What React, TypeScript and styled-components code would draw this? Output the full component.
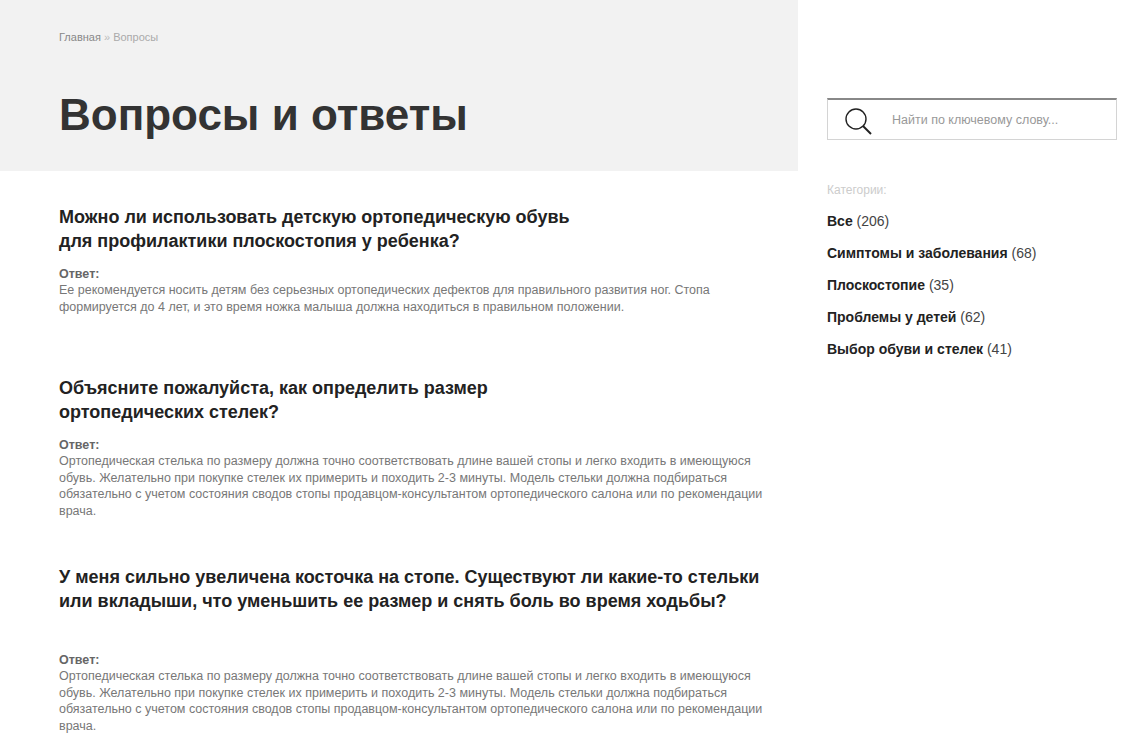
import React from "react";
import styled, { createGlobalStyle } from "styled-components";

const Global = createGlobalStyle`
  body { margin: 0; font-family: "Liberation Sans", Arial, sans-serif; background: #fff; }
`;
const Page = styled.div`display: flex; width: 1126px; min-height: 741px;`;
const Main = styled.div`width: 798px; flex-shrink: 0;`;
const Hero = styled.div`background: #f2f2f2; height: 171px; padding: 31px 0 0 59px; box-sizing: border-box;`;
const Crumbs = styled.div`font-size: 11px; color: #888;
  span { color: #bbb; } b { font-weight: normal; color: #aaa; }`;
const Title = styled.h1`margin: 47px 0 0; font-size: 44px; font-weight: bold; color: #333; line-height: 50px;`;
const List = styled.div`padding: 34px 0 0 59px; width: 705px;`;
const Item = styled.div<{ gap: number }>`margin-bottom: ${p => p.gap}px;`;
const Q = styled.h3<{ after: number }>`margin: 0 0 ${p => p.after}px; font-size: 18px; line-height: 24px; color: #222; font-weight: bold;`;
const Label = styled.div`font-size: 12.5px; font-weight: bold; color: #666; line-height: 16px;`;
const Ans = styled.p`margin: 0; font-size: 12.5px; line-height: 16.5px; color: #777;`;
const Side = styled.div`padding: 98px 0 0 29px; flex: 1;`;
const Search = styled.div`width: 290px; height: 42px; box-sizing: border-box; border: 1px solid #d4d4d4; border-top: 2px solid #888; display: flex; align-items: center;`;
const Icon = styled.div`width: 62px; display: flex; justify-content: center; padding-top: 4px;`;
const Input = styled.input`border: none; outline: none; font-family: inherit; font-size: 12.5px; color: #555; flex: 1; background: transparent;
  &::placeholder { color: #999; }`;
const CatTitle = styled.div`margin-top: 43px; font-size: 12px; color: #ccc;`;
const Cats = styled.div`margin-top: 16px; display: flex; flex-direction: column; gap: 15px;`;
const Cat = styled.div`font-size: 14px; line-height: 17px; color: #222;
  b { font-weight: bold; } span { color: #444; }`;

const answer2 = "Ортопедическая стелька по размеру должна точно соответствовать длине вашей стопы и легко  входить в имеющуюся обувь. Желательно при покупке стелек их примерить и походить 2-3 минуты. Модель стельки должна подбираться обязательно с учетом состояния сводов стопы продавцом-консультантом ортопедического салона или по рекомендации врача.";

const items = [
  { q: ["Можно ли использовать детскую ортопедическую обувь", "для профилактики плоскостопия у ребенка?"], a: "Ее рекомендуется носить детям без серьезных ортопедических дефектов для правильного развития ног. Стопа формируется до 4 лет, и это время ножка малыша должна находиться в правильном положении.", after: 13, gap: 61 },
  { q: ["Объясните пожалуйста, как определить размер", "ортопедических стелек?"], a: answer2, after: 13, gap: 46 },
  { q: ["У меня сильно увеличена косточка на стопе. Существуют ли какие-то стельки", "или вкладыши, что уменьшить ее размер и снять боль во время ходьбы?"], a: answer2, after: 39, gap: 0 },
];

const cats = [["Все", "206"], ["Симптомы и заболевания", "68"], ["Плоскостопие", "35"], ["Проблемы у детей", "62"], ["Выбор обуви и стелек", "41"]];

export default function App() {
  return (
    <Page>
      <Global />
      <Main>
        <Hero>
          <Crumbs>Главная <span>»</span> <b>Вопросы</b></Crumbs>
          <Title>Вопросы и ответы</Title>
        </Hero>
        <List>
          {items.map((it, i) => (
            <Item key={i} gap={it.gap}>
              <Q after={it.after}>{it.q[0]}<br />{it.q[1]}</Q>
              <Label>Ответ:</Label>
              <Ans>{it.a}</Ans>
            </Item>
          ))}
        </List>
      </Main>
      <Side>
        <Search>
          <Icon>
            <svg width="30" height="30" viewBox="0 0 30 30" fill="none" stroke="#222" strokeWidth="1.4">
              <circle cx="12" cy="12" r="10" />
              <path d="M19 19l8 8" strokeWidth="2" />
            </svg>
          </Icon>
          <Input placeholder="Найти по ключевому слову..." />
        </Search>
        <CatTitle>Категории:</CatTitle>
        <Cats>
          {cats.map(([n, c]) => <Cat key={n}><b>{n}</b> <span>({c})</span></Cat>)}
        </Cats>
      </Side>
    </Page>
  );
}
